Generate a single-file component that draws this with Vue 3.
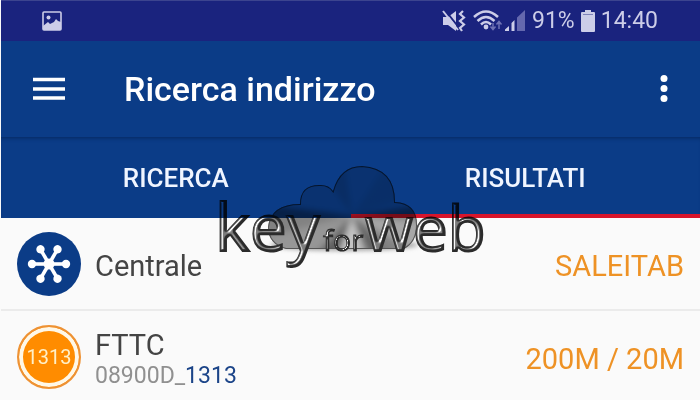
<script setup>
import { ref } from 'vue'

const active = ref('risultati')
const tabs = [
  { id: 'ricerca', label: 'RICERCA' },
  { id: 'risultati', label: 'RISULTATI' },
]
const spokes = [0, 60, 120, 180, 240, 300]
</script>

<template>
  <div class="app">
    <div class="status">
      <svg class="photo" viewBox="0 0 20 20" width="20" height="20" aria-hidden="true">
        <rect x="1" y="1" width="18" height="18" rx="1" fill="none" stroke="#cccde8" stroke-width="1.6" />
        <circle cx="6.5" cy="6.5" r="2" fill="#cccde8" />
        <path d="M1 15 L6 11 L8 13 L12 11 L14 8 L16 10 L19 11 V19 H1 Z" fill="#cccde8" />
      </svg>
      <div class="indicators">
        <svg viewBox="0 0 84 24" width="84" height="24" aria-hidden="true">
          <path d="M1 8 H6 L14 2 V22 L6 16 H1 Z" fill="#cccde8" />
          <path d="M3 1 L18 20" stroke="#1a237e" stroke-width="2" />
          <path d="M1 2 L16 21" stroke="#cccde8" stroke-width="2" />
          <path d="M21 2 L18 5 L22 8.500 L18 12 L22 15.500 L18 19 L20 22" fill="none" stroke="#cccde8" stroke-width="2.200" />
          <g fill="none" stroke="#cccde8" stroke-width="2.500">
            <path d="M32 8 Q44 -3 56 8" />
            <path d="M35.500 12 Q44 4 52.500 12" />
            <path d="M39 15.500 Q44 10.500 49 15.500" />
          </g>
          <circle cx="44" cy="18" r="2.400" fill="#cccde8" />
          <path d="M51 14 V20 M48.500 17.500 L51 20.500 L53.500 17.500 M57 20 V13 M54.500 15.500 L57 12.500 L59.500 15.500" fill="none" stroke="#6e72b4" stroke-width="1.500" />
          <path d="M63 22 V20.500 L67 17 V22 Z M69.500 22 V14 L72.500 11 V22 Z" fill="#cccde8" />
          <path d="M75 22 V8.500 L83 1 V22 Z" fill="#6468ae" />
        </svg>
        <span>91%</span>
        <svg viewBox="0 0 14 22" width="14" height="22" aria-hidden="true">
          <path d="M4 0 H10 V2 H13 Q14 2 14 3 V21 Q14 22 13 22 H1 Q0 22 0 21 V3 Q0 2 1 2 H4 Z" fill="#cccde8" />
          <path d="M2 4.500 H12" stroke="#7e82b8" stroke-width="1" />
        </svg>
        <span>14:40</span>
      </div>
    </div>

    <header class="toolbar">
      <button class="icon-button" type="button" aria-label="Menu">
        <svg viewBox="0 0 32 24" width="32" height="24">
          <path d="M0 2.500 H32 M0 12 H32 M0 21 H32" stroke="#fff" stroke-width="3.400" />
        </svg>
      </button>
      <h1>Ricerca indirizzo</h1>
      <button class="icon-button" type="button" aria-label="Altre opzioni">
        <svg viewBox="0 0 8 28" width="8" height="28">
          <g fill="#fff">
            <circle cx="4" cy="3.500" r="3.500" />
            <circle cx="4" cy="13.500" r="3.500" />
            <circle cx="4" cy="23.500" r="3.500" />
          </g>
        </svg>
      </button>
    </header>

    <nav class="tabs">
      <button
        v-for="tab in tabs"
        :key="tab.id"
        type="button"
        :class="{ active: active === tab.id }"
        @click="active = tab.id"
      >{{ tab.label }}</button>
    </nav>

    <main>
      <section class="row">
        <svg class="badge" viewBox="0 0 64 64" width="64" height="64" aria-hidden="true">
          <circle cx="32" cy="32" r="32" fill="#0b3c87" />
          <g v-for="angle in spokes" :key="angle" :transform="`rotate(${angle} 32 32)`">
            <path d="M32 32 H49" stroke="#fff" stroke-width="3.600" />
            <circle cx="49" cy="32" r="4.200" fill="#fff" />
          </g>
          <circle cx="32" cy="32" r="5.500" fill="#fff" />
        </svg>
        <div class="label">Centrale</div>
        <div class="value">SALEITAB</div>
      </section>
      <section class="row">
        <div class="badge cabinet">1313</div>
        <div class="label">
          FTTC
          <div class="code">08900D_<b>1313</b></div>
        </div>
        <div class="value">200M / 20M</div>
      </section>
    </main>

    <svg class="watermark" viewBox="0 0 300 130" width="300" height="130" role="img" aria-label="key for web">
      <defs>
        <clipPath id="cloud-clip">
          <path d="M72 89 Q54 84 54 67 Q57 44 86 44 Q86 24 107 25 Q115 25 119 31 Q126 6 148 6 Q181 8 181 42 Q203 43 203 65 Q203 82 190 89 Z" />
        </clipPath>
        <filter id="soft" x="-20%" y="-20%" width="140%" height="140%"><feGaussianBlur stdDeviation="3" /></filter>
        <filter id="shade" x="-20%" y="-200%" width="140%" height="500%"><feGaussianBlur stdDeviation="2" /></filter>
        <filter id="bevel" x="-5%" y="-5%" width="110%" height="110%" color-interpolation-filters="sRGB">
          <feGaussianBlur in="SourceAlpha" stdDeviation="1" result="height" />
          <feSpecularLighting in="height" surfaceScale="5" specularConstant="1.2" specularExponent="9" lighting-color="#fff" result="shine">
            <feDistantLight azimuth="205" elevation="30" />
          </feSpecularLighting>
          <feComposite in="shine" in2="SourceAlpha" operator="in" result="rim" />
          <feComposite in="SourceGraphic" in2="rim" operator="arithmetic" k2="1" k3="1" />
        </filter>
      </defs>
      <ellipse cx="130" cy="85" rx="74" ry="6" fill="#aaa" filter="url(#shade)" />
      <g clip-path="url(#cloud-clip)">
        <rect x="40" width="180" height="100" fill="#d4d4d4" />
        <g filter="url(#soft)">
          <path d="M138 56 L20 40 V110 H240 V40 Z" fill="#858585" />
          <path d="M138 56 L84 110 H20 V85 Z" fill="#999" />
          <path d="M138 56 L90 110 H116 Z" fill="#606060" />
          <path d="M138 56 L120 110 H156 Z" fill="#c8c8c8" />
          <path d="M138 56 L165 110 H190 Z" fill="#606060" />
          <path d="M138 56 L210 62 V96 Z" fill="#aaa" />
          <path d="M138 56 L100 0 H130 Z" fill="#bbb" />
          <path d="M138 56 L175 0 H220 V30 Z" fill="#c4c4c4" />
        </g>
        <path d="M72 89 Q54 84 54 67 Q57 44 86 44 Q86 24 107 25 Q115 25 119 31 Q126 6 148 6 Q181 8 181 42 Q203 43 203 65 Q203 82 190 89 Z" fill="none" stroke="#555" stroke-width="2" />
      </g>
      <g class="wordmark" filter="url(#bevel)">
        <text x="1" y="91" font-size="66">key</text>
        <text class="small" x="109" y="91" font-size="30">for</text>
        <text x="151" y="91" font-size="62">web</text>
      </g>
    </svg>
  </div>
</template>

<style>
body {
  margin: 0;
  background: #fafafa;
}
</style>

<style scoped>
.app {
  position: relative;
  min-height: 100vh;
  box-sizing: border-box;
  padding-left: 1px;
  background: #fafafa;
  color: #444;
  font-family: Roboto, "Liberation Sans", sans-serif;
}
button {
  border: 0;
  padding: 0;
  background: none;
  color: inherit;
  font: inherit;
}
.status {
  display: flex;
  align-items: center;
  justify-content: space-between;
  height: 41px;
  padding: 0 42px 0 41px;
  border-top: 1px solid #3c448f;
  box-sizing: border-box;
  background: #1a237e;
  color: #cccde8;
  font-size: 23px;
  line-height: 40px;
}
.indicators {
  display: flex;
  align-items: center;
  gap: 6px;
}
.toolbar {
  display: flex;
  align-items: center;
  height: 96px;
  padding: 0 32px;
  background: #0b3c87;
  color: #fff;
}
.toolbar h1 {
  flex: 1;
  margin: 0 0 0 59px;
  font-size: 34px;
  line-height: 40px;
  font-weight: 500;
}
.icon-button {
  display: flex;
}
.tabs {
  display: flex;
  height: 81px;
  background: #0b3c87;
  color: #f0f5ff;
  box-shadow: inset 0 4px 4px -3px #06275f;
}
.tabs button {
  flex: 1;
  padding-top: 4px;
  border-bottom: 4px solid transparent;
  font-size: 26px;
  font-weight: 500;
}
.tabs .active {
  border-bottom-color: #d8152b;
}
.row {
  display: flex;
  align-items: center;
  gap: 14px;
  height: 93px;
  box-sizing: border-box;
  padding: 0 16px;
  border-bottom: 2px solid #ebebeb;
}
.row:last-child {
  height: 91px;
  border-bottom: 0;
}
.badge {
  flex: none;
  width: 64px;
  height: 64px;
}
.cabinet {
  display: flex;
  align-items: center;
  justify-content: center;
  box-sizing: border-box;
  border: 2px solid #ee9234;
  border-radius: 50%;
  background: #ff8c00;
  box-shadow: inset 0 0 0 4px #fff8e8;
  color: #fff0c8;
  font-size: 20px;
}
.label,
.value {
  padding-top: 4px;
  font-size: 29px;
  line-height: 34px;
}
.label {
  flex: 1;
}
.code {
  color: #909090;
  font-size: 23px;
  line-height: 28px;
}
.code b {
  color: #1b4488;
  font-weight: 400;
}
.value {
  color: #ee9225;
}
.watermark {
  position: absolute;
  top: 160px;
  left: calc(50% - 136px);
  overflow: visible;
  mix-blend-mode: multiply;
  pointer-events: none;
}
.wordmark {
  fill: #2c2c2c;
  stroke: #2c2c2c;
  stroke-width: 2;
  font-family: "Open Sans", "Noto Sans", sans-serif;
}
.wordmark .small {
  stroke-width: 1;
}
</style>
